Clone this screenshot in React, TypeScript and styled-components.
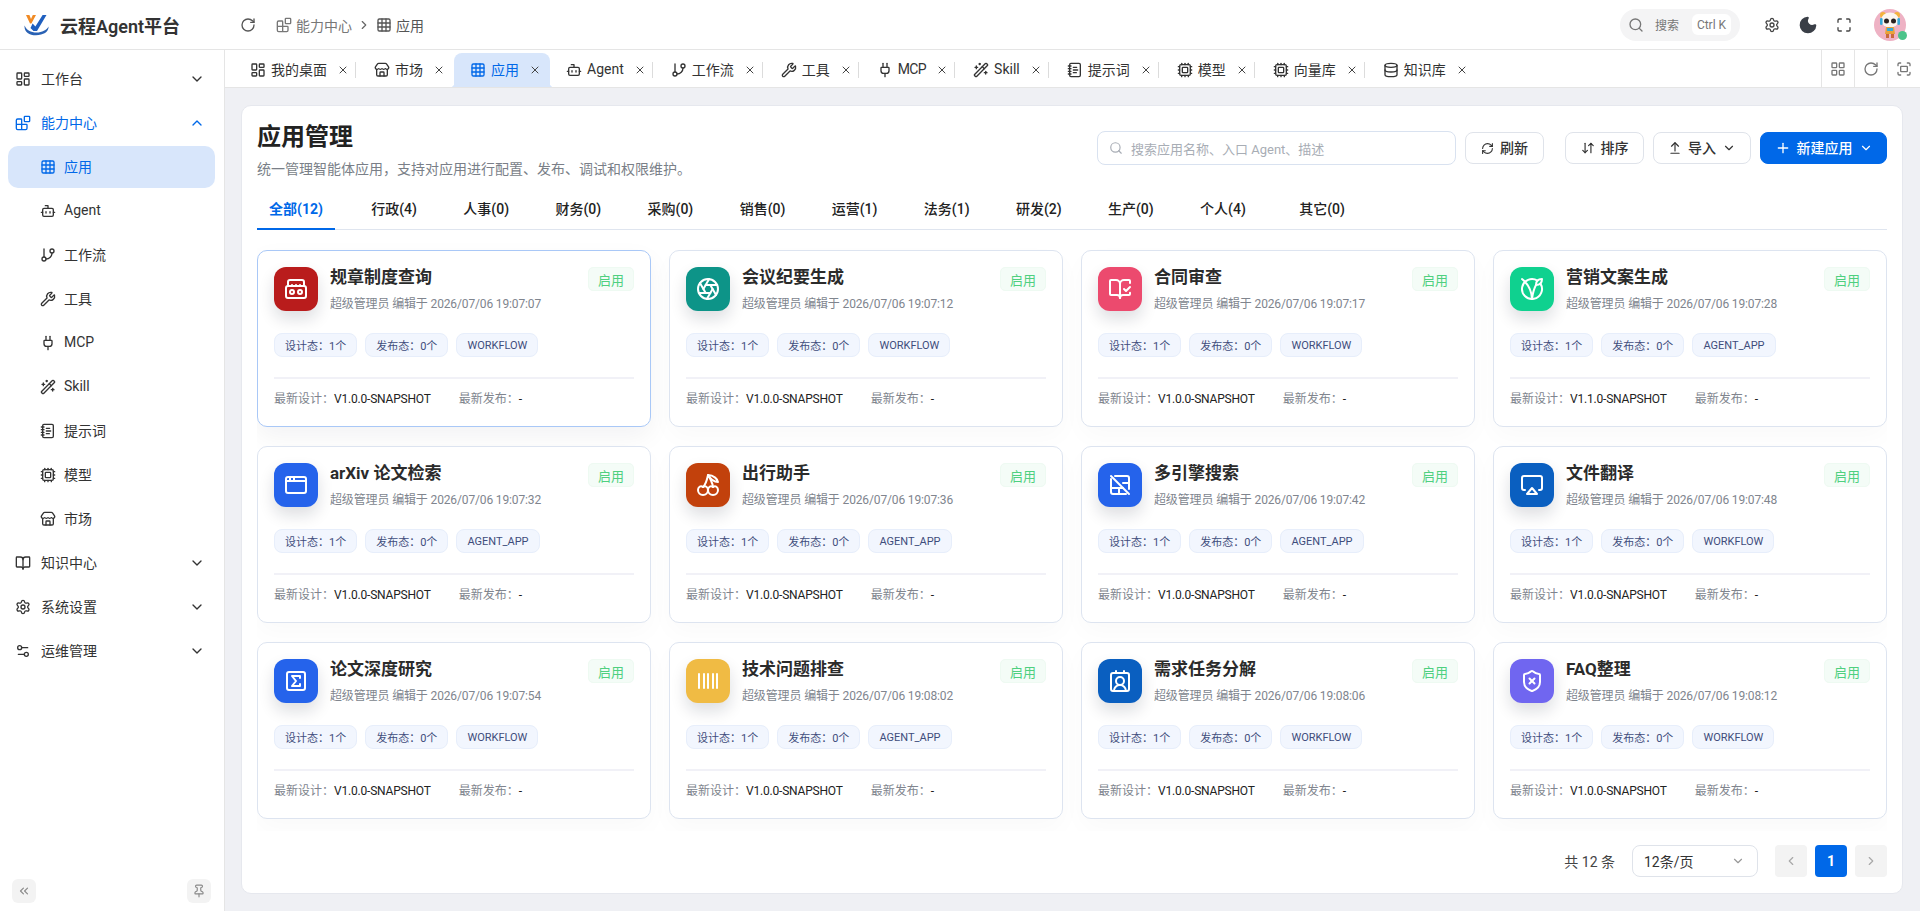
import React from 'react';
import styled, { createGlobalStyle } from 'styled-components';
import {
	Aperture, AppWindow, ArrowDownUp, ArrowUpFromLine, Airplay, Barcode, Blocks, Bot, BookOpen, BookOpenCheck,
	BoomBox, Cherry, ChevronDown, ChevronLeft, ChevronRight, ChevronUp, ChevronsLeft, ContactRound, Cpu,
	Database, Fullscreen, GitBranch, Grid3x3, LayoutDashboard, LayoutGrid, Maximize, Moon, NotebookText, Pin,
	Plug, Plus, RefreshCw, RotateCw, Search, Settings, Settings2, ShieldX, SquareSigma, Store, Vegan,
	WandSparkles, Wrench, X,
} from 'lucide-react';

const GlobalStyle = createGlobalStyle`
	html, body { margin: 0; padding: 0; height: 100%; overflow: hidden; }
	body { font-family: Roboto, "Noto Sans CJK SC", sans-serif; color: #333; background: #fff; }
	* { box-sizing: border-box; }
`;

const BLUE = '#0068e8';
const COLON = '\uFF1A';
const COMMA = '\uFF0C';

function LogoMark() {
	return (
		<svg width="25" height="22" viewBox="0 0 25 22" fill="none">
			<path d="M2 1h3.4l1.6 4 1.8-4H12L7.4 9.5H6z" fill="#f08a24" />
			<path d="M6.5 14 L8.6 9.6 L11.4 12.4 L18.6 1 L22.5 1 L13 17 H9.5 Z" fill="#1f5fbf" />
			<path d="M.6 11.5c-.8 5.5 4 9.8 11.4 9.8S24.6 18 24.6 12.6c-2 3.6-6.6 6-12.1 6S2.2 15.8.6 11.5z" fill="#2a62b4" />
		</svg>
	);
}

function Mascot() {
	return (
		<svg width="32" height="32" viewBox="0 0 32 32">
			<circle cx="16" cy="16" r="16" fill="#eeb2c4" />
			<circle cx="9" cy="6" r="3" fill="#f3b33d" />
			<circle cx="23" cy="6" r="3" fill="#f3b33d" />
			<ellipse cx="16" cy="11" rx="9" ry="7.5" fill="#fbf6ef" />
			<rect x="6" y="9" width="2.6" height="7" rx="1.3" fill="#37a9d8" />
			<rect x="23.4" y="9" width="2.6" height="7" rx="1.3" fill="#37a9d8" />
			<circle cx="12.5" cy="12" r="2.5" fill="#2a2320" />
			<circle cx="19.5" cy="12" r="2.5" fill="#2a2320" />
			<path d="M12 18h8l1 7h-10z" fill="#e8a33a" />
			<rect x="13" y="19" width="6" height="3" fill="#37a9d8" />
			<rect x="12" y="25" width="3" height="4" fill="#c96a3c" />
			<rect x="17" y="25" width="3" height="4" fill="#c96a3c" />
		</svg>
	);
}

function SlashedFrame({ size }: { size: number }) {
	return (
		<svg width={size} height={size} viewBox="0 0 24 24" fill="none" stroke="currentColor" strokeWidth="2" strokeLinecap="round" strokeLinejoin="round">
			<path d="M3 3l18 18" />
			<path d="M3 6v13a2 2 0 0 0 2 2h13" />
			<path d="M7 3h12a2 2 0 0 1 2 2v11" />
			<path d="M3 15h12" />
			<path d="M11 15v6" />
			<path d="M21 10h-6" />
		</svg>
	);
}

const Shell = styled.div`
	display: flex;
	flex-direction: column;
	width: 100vw;
	height: 100vh;
	overflow: hidden;
`;

const Header = styled.header`
	display: flex;
	align-items: center;
	flex: none;
	height: 50px;
	padding: 0 14px 0 24px;
	border-bottom: 1px solid #e5e5e5;
`;

const Brand = styled.div`
	display: flex;
	align-items: center;
	gap: 11px;
	width: 216px;
	font-size: 18px;
	font-weight: 600;
	color: #333;
`;

const GhostIcon = styled.span<{ $color?: string }>`
	display: inline-flex;
	align-items: center;
	justify-content: center;
	flex: none;
	width: 16px;
	color: ${(p) => p.$color || '#444'};
`;

const MoonIcon = styled(Moon)`
	flex: none;
`;

const Crumbs = styled.nav`
	display: flex;
	align-items: center;
	margin-left: 20px;
	font-size: 14px;
	color: #666;
`;

const Crumb = styled.span<{ $current?: boolean }>`
	display: inline-flex;
	align-items: center;
	gap: 4px;
	color: ${(p) => (p.$current ? '#555' : '#777')};
`;

const CrumbSep = styled.span`
	display: inline-flex;
	margin: 0 5px;
	color: #666;
`;

const HeaderRight = styled.div`
	display: flex;
	align-items: center;
	margin-left: auto;
`;

const SearchPill = styled.div`
	display: flex;
	align-items: center;
	width: 120px;
	height: 32px;
	margin-right: 24px;
	padding: 0 9px 0 8px;
	border-radius: 16px;
	background: #f4f4f5;
	font-size: 12px;
	color: #777;
`;

const PillLabel = styled.span`
	margin-left: 11px;
`;

const Kbd = styled.span`
	display: flex;
	align-items: center;
	justify-content: center;
	width: 39px;
	height: 21px;
	margin-left: auto;
	border-radius: 6px;
	background: #fff;
	font-size: 12px;
	color: #777;
`;

const HeaderIcons = styled.div`
	display: flex;
	align-items: center;
	gap: 20px;
`;

const Avatar = styled.div`
	position: relative;
	width: 32px;
	height: 32px;
	margin-left: 22px;
`;

const OnlineDot = styled.span`
	position: absolute;
	right: -1px;
	bottom: 1px;
	width: 9px;
	height: 9px;
	border-radius: 50%;
	background: #4cc38a;
`;

const Body = styled.div`
	display: flex;
	flex: 1;
	min-height: 0;
`;

const Sidebar = styled.aside`
	display: flex;
	flex-direction: column;
	flex: none;
	width: 225px;
	padding: 8px 9px 8px 8px;
	border-right: 1px solid #e5e5e5;
`;

const NavList = styled.div`
	display: flex;
	flex-direction: column;
	flex: 1;
	gap: 2px;
`;

const NavRow = styled.div<{ $child?: boolean; $active?: boolean; $open?: boolean }>`
	display: flex;
	align-items: center;
	gap: ${(p) => (p.$child ? '8px' : '10px')};
	height: 42px;
	padding: 0 10px 0 ${(p) => (p.$child ? '32px' : '7px')};
	border-radius: 10px;
	font-size: 14px;
	color: ${(p) => (p.$active || p.$open ? BLUE : '#333')};
	background: ${(p) => (p.$active ? '#d8e6fb' : 'transparent')};

	> svg:last-child:not(:first-child) {
		margin-left: auto;
	}
`;

const NavLabel = styled.span`
	margin-top: -2px;
`;

const SideFooter = styled.div`
	display: flex;
	justify-content: space-between;
	padding: 0 4px 0 4px;
	margin-bottom: 0;
`;

const SquareButton = styled.button`
	display: flex;
	align-items: center;
	justify-content: center;
	width: 24px;
	height: 24px;
	padding: 0;
	border: 0;
	border-radius: 6px;
	background: #f3f3f3;
	color: #8a8a8a;
`;

const Main = styled.main`
	display: flex;
	flex-direction: column;
	flex: 1;
	min-width: 0;
`;

const TabBar = styled.div`
	display: flex;
	align-items: flex-end;
	flex: none;
	height: 38px;
	padding-left: 7px;
	border-bottom: 1px solid #e5e5e5;
`;

const PageTab = styled.div<{ $active?: boolean; $divider?: boolean }>`
	position: relative;
	display: flex;
	align-items: center;
	height: 34px;
	margin: ${(p) => (p.$active ? '0 -2px 0 2px' : '0')};
	padding: 0 ${(p) => (p.$active ? '9px' : '7px')} 0 ${(p) => (p.$active ? '16px' : '18px')};
	border-radius: 8px 8px 0 0;
	font-size: 14px;
	color: ${(p) => (p.$active ? BLUE : '#333')};
	background: ${(p) => (p.$active ? '#d8e6fb' : 'transparent')};

	${(p) =>
		p.$divider &&
		`&::after {
			content: '';
			position: absolute;
			right: 0;
			top: 9px;
			width: 1px;
			height: 16px;
			background: #dcdcdc;
		}`}

	${(p) =>
		p.$active &&
		`&::before {
			content: '';
			position: absolute;
			left: -4px;
			right: -4px;
			bottom: 0;
			height: 4px;
			z-index: -1;
			background:
				radial-gradient(circle at 0 0, transparent 4px, #d8e6fb 4.5px) left bottom / 4px 4px no-repeat,
				radial-gradient(circle at 100% 0, transparent 4px, #d8e6fb 4.5px) right bottom / 4px 4px no-repeat;
		}`}
`;

const TabLabel = styled.span<{ $tight?: boolean }>`
	margin: -2px 10px 0 5px;
	letter-spacing: ${(p) => (p.$tight ? '-0.6px' : 'normal')};
	white-space: nowrap;
`;

const CloseIcon = styled(X)`
	flex: none;
	color: #444;
`;

const TabTools = styled.div`
	display: flex;
	align-self: stretch;
	margin-left: auto;
`;

const TabTool = styled.div`
	display: flex;
	align-items: center;
	justify-content: center;
	width: 33px;
	border-left: 1px solid #e5e5e5;
	color: #777;
`;

const Content = styled.div`
	display: flex;
	flex: 1;
	min-height: 0;
	padding: 17px 17px 17px 16px;
	background: #eff0f4;
`;

const Panel = styled.section`
	display: flex;
	flex-direction: column;
	flex: 1;
	min-width: 0;
	padding: 16px 15px;
	border: 1px solid #e6e8ee;
	border-radius: 10px;
	background: #fff;
`;

const PanelHead = styled.div`
	display: flex;
	justify-content: space-between;
	flex: none;
`;

const PanelTitle = styled.h1`
	margin: -1px 0 0;
	font-size: 24px;
	line-height: 32px;
	font-weight: 700;
	color: #222;
`;

const PanelDesc = styled.p`
	margin: 6px 0 0;
	font-size: 14px;
	line-height: 20px;
	color: #7a7f88;
`;

const Actions = styled.div`
	display: flex;
	align-items: center;
	height: 34px;
	margin-top: 9px;
`;

const SearchField = styled.div`
	display: flex;
	align-items: center;
	gap: 8px;
	width: 359px;
	height: 34px;
	margin-right: 9px;
	padding: 0 11px;
	border: 1px solid #d9e2f0;
	border-radius: 8px;
	font-size: 13px;
	color: #a8adb5;
`;

const Btn = styled.button<{ $primary?: boolean; $spaced?: boolean; $w: number }>`
	display: flex;
	align-items: center;
	justify-content: center;
	gap: 6px;
	width: ${(p) => p.$w}px;
	height: 32px;
	margin-left: ${(p) => (p.$spaced ? '12px' : '0')};
	margin-right: 9px;
	padding: 0;
	border: 1px solid ${(p) => (p.$primary ? BLUE : '#dfe3ea')};
	border-radius: 8px;
	background: ${(p) => (p.$primary ? BLUE : '#fff')};
	color: ${(p) => (p.$primary ? '#fff' : '#333')};
	font-family: inherit;
	font-size: 14px;
	font-weight: 500;

	&:last-child {
		margin-right: 0;
	}
`;

const BtnLabel = styled.span`
	margin-top: -2px;
`;

const CategoryBar = styled.div`
	display: flex;
	flex: none;
	gap: 22.4px;
	margin-top: 11px;
	border-bottom: 1px solid #dfe5ef;
`;

const Category = styled.div<{ $active?: boolean; $extra?: number }>`
	margin-bottom: -1px;
	margin-left: ${(p) => p.$extra || 0}px;
	padding: 8px 12px 8px;
	font-size: 14px;
	line-height: 22px;
	font-weight: ${(p) => (p.$active ? 700 : 500)};
	color: ${(p) => (p.$active ? BLUE : '#222')};
	border-bottom: 2px solid ${(p) => (p.$active ? BLUE : 'transparent')};
`;

const CardScroller = styled.div`
	flex: 1;
	min-height: 0;
	overflow: hidden;
	padding-top: 20px;
`;

const CardGrid = styled.div`
	display: grid;
	grid-template-columns: repeat(4, 1fr);
	grid-auto-rows: 177px;
	column-gap: 18px;
	row-gap: 19px;
`;

const Card = styled.article<{ $hover?: boolean }>`
	display: flex;
	flex-direction: column;
	padding: 16px;
	border: 1px solid ${(p) => (p.$hover ? '#a9c8f7' : '#dde4f0')};
	border-radius: 10px;
	background: #fff;
	box-shadow: 0 10px 24px rgba(15, 23, 42, ${(p) => (p.$hover ? 0.05 : 0.025)});
`;

const CardTop = styled.div`
	display: flex;
	align-items: flex-start;
`;

const AppIcon = styled.div<{ $bg: string }>`
	display: flex;
	align-items: center;
	justify-content: center;
	flex: none;
	width: 44px;
	height: 44px;
	border-radius: 12px;
	color: #fff;
	background: ${(p) => p.$bg};
	box-shadow: 0 8px 16px rgba(15, 23, 42, 0.14);
`;

const CardHeading = styled.div`
	flex: 1;
	min-width: 0;
	margin-left: 12px;
`;

const CardTitle = styled.h3`
	margin: -1px 0 0;
	font-size: 17px;
	line-height: 22px;
	font-weight: 700;
	color: #2b2b2b;
`;

const CardMeta = styled.div`
	margin-top: 7px;
	font-size: 12px;
	line-height: 18px;
	letter-spacing: -0.14px;
	color: #80858e;
	white-space: nowrap;
`;

const StatusBadge = styled.span`
	display: flex;
	align-items: center;
	justify-content: center;
	flex: none;
	width: 46px;
	height: 24px;
	border: 1px solid #eefaf2;
	border-radius: 5px;
	background: #f4fcf7;
	font-size: 13px;
	color: #4fd07f;
`;

const TagRow = styled.div`
	display: flex;
	gap: 8px;
	margin-top: 20px;
`;

const Tag = styled.span`
	display: flex;
	align-items: center;
	height: 24px;
	padding: 0 10px;
	border: 1px solid #e7eefb;
	border-radius: 8px;
	background: #f2f6fe;
	font-size: 11px;
	color: #3f4d7c;
	white-space: nowrap;
`;

const CardFoot = styled.div`
	display: flex;
	gap: 28px;
	margin-top: 20px;
	padding-top: 11px;
	border-top: 2px solid #f1f1f7;
	font-size: 12px;
	line-height: 18px;
	color: #80858e;
`;

const FootValue = styled.span`
	letter-spacing: -0.2px;
	color: #222;
`;

const Pager = styled.div`
	display: flex;
	align-items: center;
	justify-content: flex-end;
	flex: none;
	gap: 8px;
	height: 32px;
	margin-top: 14px;
	font-size: 14px;
`;

const PagerTotal = styled.span`
	margin-right: 9px;
	color: #444;
`;

const PageSize = styled.div`
	display: flex;
	align-items: center;
	justify-content: space-between;
	width: 126px;
	height: 32px;
	margin-right: 9px;
	padding: 0 12px 0 11px;
	border: 1px solid #dfe3ea;
	border-radius: 8px;
	color: #333;
`;

const PageCell = styled.div<{ $active?: boolean }>`
	display: flex;
	align-items: center;
	justify-content: center;
	width: 32px;
	height: 32px;
	border-radius: 4px;
	background: ${(p) => (p.$active ? BLUE : '#f3f3f3')};
	color: ${(p) => (p.$active ? '#fff' : '#a8a8a8')};
	font-weight: 700;
`;

const navChildren = [
	{ label: '应用', Icon: Grid3x3, active: true },
	{ label: 'Agent', Icon: Bot },
	{ label: '工作流', Icon: GitBranch },
	{ label: '工具', Icon: Wrench },
	{ label: 'MCP', Icon: Plug },
	{ label: 'Skill', Icon: WandSparkles },
	{ label: '提示词', Icon: NotebookText },
	{ label: '模型', Icon: Cpu },
	{ label: '市场', Icon: Store },
];

const pageTabs = [
	{ label: '我的桌面', Icon: LayoutDashboard, divider: true },
	{ label: '市场', Icon: Store },
	{ label: '应用', Icon: Grid3x3, active: true },
	{ label: 'Agent', Icon: Bot, divider: true },
	{ label: '工作流', Icon: GitBranch, divider: true },
	{ label: '工具', Icon: Wrench, divider: true },
	{ label: 'MCP', Icon: Plug, divider: true },
	{ label: 'Skill', Icon: WandSparkles, divider: true },
	{ label: '提示词', Icon: NotebookText, divider: true },
	{ label: '模型', Icon: Cpu, divider: true },
	{ label: '向量库', Icon: Cpu, divider: true },
	{ label: '知识库', Icon: Database },
];

const categories = [
	'全部(12)', '行政(4)', '人事(0)', '财务(0)', '采购(0)', '销售(0)',
	'运营(1)', '法务(1)', '研发(2)', '生产(0)', '个人(4)', '其它(0)',
];

const categoryExtra: Record<string, number> = { '行政(4)': 2, '其它(0)': 7 };

const apps = [
	{ name: '规章制度查询', time: '19:07:07', bg: '#b91c1c', Icon: BoomBox, kind: 'WORKFLOW' },
	{ name: '会议纪要生成', time: '19:07:12', bg: '#0d9488', Icon: Aperture, kind: 'WORKFLOW' },
	{ name: '合同审查', time: '19:07:17', bg: '#ec4a6e', Icon: BookOpenCheck, kind: 'WORKFLOW' },
	{ name: '营销文案生成', time: '19:07:28', bg: '#0fd18f', Icon: Vegan, kind: 'AGENT_APP', version: 'V1.1.0-SNAPSHOT' },
	{ name: 'arXiv 论文检索', time: '19:07:32', bg: '#2563eb', Icon: AppWindow, kind: 'AGENT_APP' },
	{ name: '出行助手', time: '19:07:36', bg: '#c2410c', Icon: Cherry, kind: 'AGENT_APP' },
	{ name: '多引擎搜索', time: '19:07:42', bg: '#2563eb', Icon: SlashedFrame, kind: 'AGENT_APP' },
	{ name: '文件翻译', time: '19:07:48', bg: '#0a5fc0', Icon: Airplay, kind: 'WORKFLOW' },
	{ name: '论文深度研究', time: '19:07:54', bg: '#2563eb', Icon: SquareSigma, kind: 'WORKFLOW' },
	{ name: '技术问题排查', time: '19:08:02', bg: '#f0bb44', Icon: Barcode, kind: 'AGENT_APP' },
	{ name: '需求任务分解', time: '19:08:06', bg: '#0a5fc0', Icon: ContactRound, kind: 'WORKFLOW' },
	{ name: 'FAQ整理', time: '19:08:12', bg: '#7066f0', Icon: ShieldX, kind: 'WORKFLOW' },
];

export default function App() {
	return (
		<Shell>
			<GlobalStyle />
			<Header>
				<Brand>
					<LogoMark />
					云程Agent平台
				</Brand>
				<GhostIcon $color="#555"><RotateCw size={16} /></GhostIcon>
				<Crumbs>
					<Crumb><Blocks size={16} />能力中心</Crumb>
					<CrumbSep><ChevronRight size={14} /></CrumbSep>
					<Crumb $current><Grid3x3 size={16} />应用</Crumb>
				</Crumbs>
				<HeaderRight>
					<SearchPill>
						<Search size={16} />
						<PillLabel>搜索</PillLabel>
						<Kbd>Ctrl K</Kbd>
					</SearchPill>
					<HeaderIcons>
						<GhostIcon><Settings size={16} /></GhostIcon>
						<GhostIcon $color="#3a3f47"><MoonIcon size={20} fill="#3a3f47" /></GhostIcon>
						<GhostIcon><Maximize size={16} /></GhostIcon>
					</HeaderIcons>
					<Avatar>
						<Mascot />
						<OnlineDot />
					</Avatar>
				</HeaderRight>
			</Header>
			<Body>
				<Sidebar>
					<NavList>
						<NavRow><LayoutDashboard size={16} /><NavLabel>工作台</NavLabel><ChevronDown size={16} /></NavRow>
						<NavRow $open><Blocks size={16} /><NavLabel>能力中心</NavLabel><ChevronUp size={16} /></NavRow>
						{navChildren.map(({ label, Icon, active }) => (
							<NavRow key={label} $child $active={active}><Icon size={16} /><NavLabel>{label}</NavLabel></NavRow>
						))}
						<NavRow><BookOpen size={16} /><NavLabel>知识中心</NavLabel><ChevronDown size={16} /></NavRow>
						<NavRow><Settings size={16} /><NavLabel>系统设置</NavLabel><ChevronDown size={16} /></NavRow>
						<NavRow><Settings2 size={16} /><NavLabel>运维管理</NavLabel><ChevronDown size={16} /></NavRow>
					</NavList>
					<SideFooter>
						<SquareButton><ChevronsLeft size={14} /></SquareButton>
						<SquareButton><Pin size={14} /></SquareButton>
					</SideFooter>
				</Sidebar>
				<Main>
					<TabBar>
						{pageTabs.map(({ label, Icon, active, divider }) => (
							<PageTab key={label} $active={active} $divider={divider}>
								<Icon size={16} />
								<TabLabel $tight={label === 'MCP'}>{label}</TabLabel>
								<CloseIcon size={12} />
							</PageTab>
						))}
						<TabTools>
							<TabTool><LayoutGrid size={16} /></TabTool>
							<TabTool><RotateCw size={16} /></TabTool>
							<TabTool><Fullscreen size={16} /></TabTool>
						</TabTools>
					</TabBar>
					<Content>
						<Panel>
							<PanelHead>
								<div>
									<PanelTitle>应用管理</PanelTitle>
									<PanelDesc>{`统一管理智能体应用${COMMA}支持对应用进行配置、发布、调试和权限维护。`}</PanelDesc>
								</div>
								<Actions>
									<SearchField>
										<Search size={14} />
										搜索应用名称、入口 Agent、描述
									</SearchField>
									<Btn $w={79}><RefreshCw size={13} /><BtnLabel>刷新</BtnLabel></Btn>
									<Btn $w={79} $spaced><ArrowDownUp size={14} /><BtnLabel>排序</BtnLabel></Btn>
									<Btn $w={98}><ArrowUpFromLine size={14} /><BtnLabel>导入</BtnLabel><ChevronDown size={14} /></Btn>
									<Btn $w={127} $primary><Plus size={16} /><BtnLabel>新建应用</BtnLabel><ChevronDown size={14} /></Btn>
								</Actions>
							</PanelHead>
							<CategoryBar>
								{categories.map((label, i) => (
									<Category key={label} $active={i === 0} $extra={categoryExtra[label]}>{label}</Category>
								))}
							</CategoryBar>
							<CardScroller>
								<CardGrid>
									{apps.map(({ name, time, bg, Icon, kind, version }, i) => (
										<Card key={name} $hover={i === 0}>
											<CardTop>
												<AppIcon $bg={bg}><Icon size={24} /></AppIcon>
												<CardHeading>
													<CardTitle>{name}</CardTitle>
													<CardMeta>超级管理员 编辑于 2026/07/06 {time}</CardMeta>
												</CardHeading>
												<StatusBadge>启用</StatusBadge>
											</CardTop>
											<TagRow>
												<Tag>{`设计态${COLON}1个`}</Tag>
												<Tag>{`发布态${COLON}0个`}</Tag>
												<Tag>{kind}</Tag>
											</TagRow>
											<CardFoot>
												<span>{`最新设计${COLON}`}<FootValue>{version || 'V1.0.0-SNAPSHOT'}</FootValue></span>
												<span>{`最新发布${COLON}`}<FootValue>-</FootValue></span>
											</CardFoot>
										</Card>
									))}
								</CardGrid>
							</CardScroller>
							<Pager>
								<PagerTotal>共 12 条</PagerTotal>
								<PageSize>12条/页<ChevronDown size={14} color="#999" /></PageSize>
								<PageCell><ChevronLeft size={14} /></PageCell>
								<PageCell $active>1</PageCell>
								<PageCell><ChevronRight size={14} /></PageCell>
							</Pager>
						</Panel>
					</Content>
				</Main>
			</Body>
		</Shell>
	);
}
